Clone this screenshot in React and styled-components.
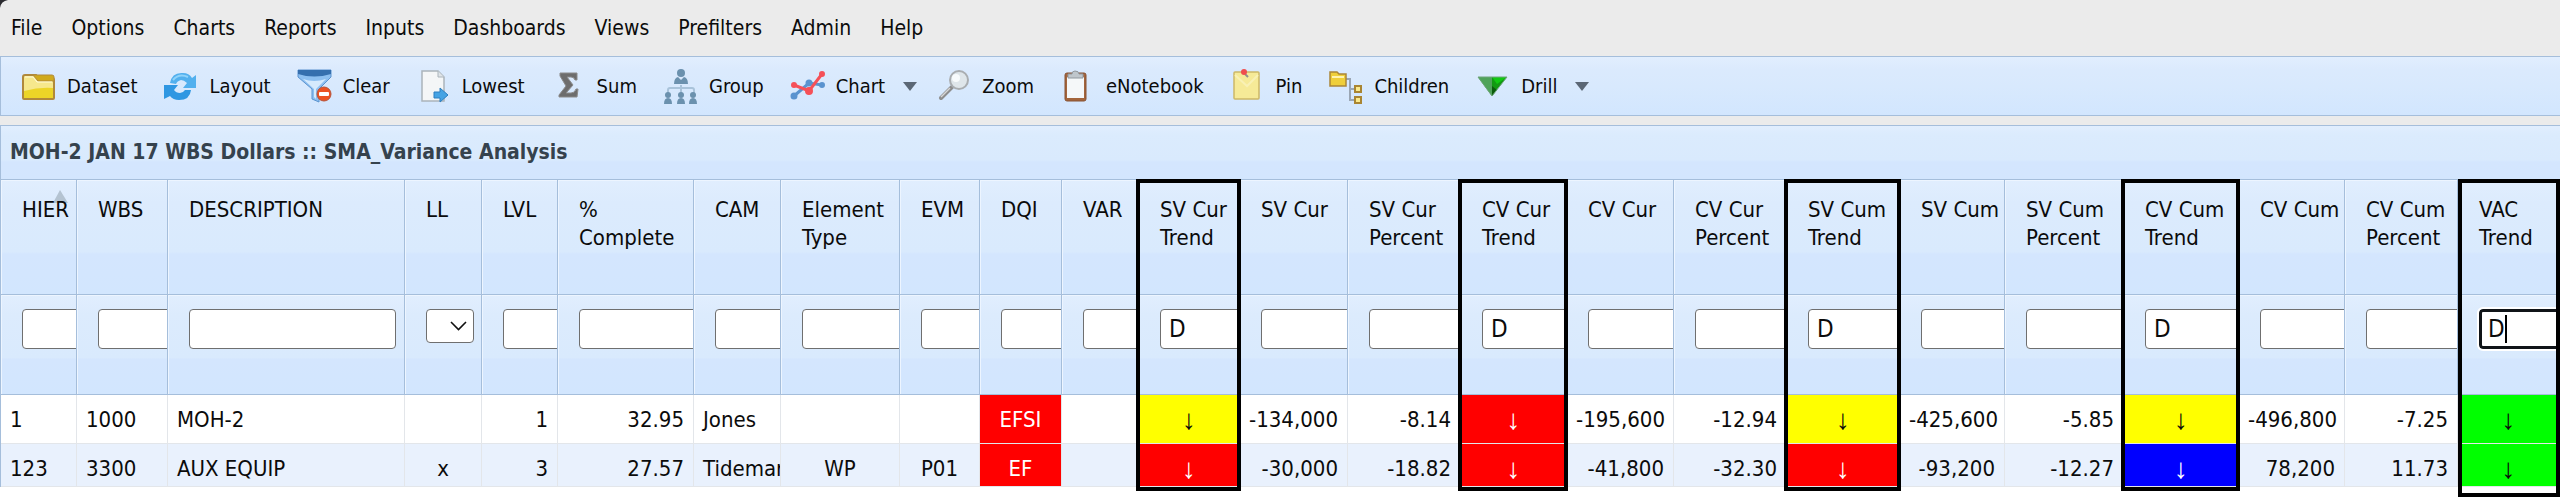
import React from "react";
import styled, { createGlobalStyle } from "styled-components";

const colors = {
  page: "#ebebeb",
  line: "#a5bedb",
  text: "#0b0b0b",
  title: "#35424d",
};

const GlobalStyle = createGlobalStyle`
  * {
    box-sizing: border-box;
  }

  body {
    margin: 0;
    background: #ffffff;
    color: ${colors.text};
    font-family: "DejaVu Sans Condensed", "DejaVu Sans", Tahoma, sans-serif;
    overflow: hidden;
  }
`;

const Page = styled.div`
  display: flex;
  flex-direction: column;
  background: ${colors.page};
`;

const Corner = styled.svg`
  position: absolute;
  top: 0;
  left: 0;
`;

const MenuBar = styled.nav`
  display: flex;
  gap: 29px;
  height: 56px;
  padding: 0 11px;
  align-items: center;
`;

const MenuItem = styled.a`
  color: inherit;
  font-size: 21px;
  line-height: 28px;
  text-decoration: none;
`;

const Toolbar = styled.div`
  display: flex;
  align-items: center;
  gap: 26px;
  height: 60px;
  margin-bottom: 9px;
  padding: 0 20px;
  border: 1px solid ${colors.line};
  border-right: none;
  background: linear-gradient(#e1eefe 0, #dbeafd 12px, #d8e9fd 30px, #d2e6fe 100%);
`;

const ToolButton = styled.button`
  display: flex;
  align-items: center;
  gap: 11px;
  padding: 0;
  border: none;
  background: none;
  color: inherit;
  font-family: inherit;
  font-size: 20px;
  line-height: 28px;
  cursor: pointer;
`;

const Caret = styled.svg`
  margin: 0 -7px 0 7px;
`;

const Title = styled.h1`
  margin: 0;
  height: 54px;
  padding: 12px 9px;
  border: 1px solid ${colors.line};
  border-width: 1px 0 0 1px;
  background: linear-gradient(#e1eefe 0, #dbebfd 9px, #d9eafd 34px, #d4e6fe 36px, #d3e6fe 100%);
  color: ${colors.title};
  font-size: 21px;
  line-height: 28px;
`;

const Grid = styled.table`
  width: 100%;
  table-layout: fixed;
  border-collapse: separate;
  border-spacing: 0;
  border-left: 1px solid ${colors.line};
  font-size: 22px;
  line-height: 28px;
`;

const HeadCell = styled.th`
  position: relative;
  height: ${(p) => (p.$filter ? 100 : 116)}px;
  padding: 0;
  border-right: 1px solid ${colors.line};
  border-bottom: 1px solid ${colors.line};
  border-top: ${(p) => (p.$filter ? "none" : `1px solid ${colors.line}`)};
  box-shadow: inset 1px 1px 0 #edf5ff;
  background: linear-gradient(#e1eefe 0, #dcebfd 20%, #d9eafd 63%, #d4e6fe 65%, #d2e6fe 100%);
  font-weight: normal;
  text-align: left;
  vertical-align: top;
`;

const HeadText = styled.div`
  position: relative;
  padding: 16px 0 0 21px;
`;

const FilterSlot = styled.div`
  position: relative;
  height: 60px;
  padding: 14px 0 0 21px;
  overflow: hidden;
`;

const FilterInput = styled.input`
  display: block;
  width: 207px;
  height: 40px;
  padding: 0 8px;
  border: 1px solid #6f6f6f;
  border-radius: 4px;
  background: #ffffff;
  color: inherit;
  font-family: inherit;
  font-size: 24px;
  outline: none;

  &[data-active="true"] {
    padding: 0 6px;
    border: 3px solid #101418;
    outline: 2px solid #ffffff;
  }
`;

const TextCursor = styled.span`
  position: absolute;
  top: 20px;
  left: 47px;
  width: 2px;
  height: 28px;
  background: #000000;
`;

const SelectWrap = styled.div`
  display: grid;
  width: 48px;
  height: 34px;

  > * {
    grid-area: 1 / 1;
  }

  svg {
    align-self: center;
    justify-self: end;
    margin-right: 7px;
    pointer-events: none;
  }
`;

const FilterSelect = styled.select`
  width: 48px;
  height: 34px;
  appearance: none;
  border: 1px solid #6f6f6f;
  border-radius: 4px;
  background: #ffffff;
`;

const SortMark = styled.svg`
  position: absolute;
  top: 10px;
  left: 52px;
`;

const Row = styled.tr`
  background: ${(p) => (p.$alt ? "#e9f1fd" : "#ffffff")};
`;

const Cell = styled.td`
  padding: ${(p) => (p.$last ? "11px 9px 3px" : "11px 9px 9px")};
  border-right: 1px solid #e3e6ea;
  border-bottom: 1px solid #e3e6ea;
  background: ${(p) => p.$fill || "transparent"};
  color: ${(p) => (p.$light ? "#ffffff" : "inherit")};
  text-align: ${(p) => p.$align};
  white-space: nowrap;
  overflow: hidden;
`;

const Arrow = styled.span`
  display: block;
  font-family: "Liberation Sans", Arial, sans-serif;
  font-size: 28px;
  line-height: 28px;
`;

const Highlight = styled.div`
  position: absolute;
  top: -1px;
  left: ${(p) => (p.$tall ? 0 : -3)}px;
  right: ${(p) => (p.$tall ? -1 : -2)}px;
  height: ${(p) => (p.$tall ? 318 : 312)}px;
  border: 4px solid #000000;
  z-index: 2;
  pointer-events: none;
`;

const Footer = styled.div`
  min-height: 10px;
  background: #ffffff;
`;

const FolderIcon = () => (
  <g>
    <path d="M2 8 Q2 6 4 6 H15 L18 9 H31 Q33 9 33 11 V29 Q33 30 32 30 H3 Q2 30 2 29 Z" fill="#f6e88c" stroke="#b0893b" strokeWidth="2" />
    <path d="M12 6 H31 Q33 6 33 8 V12 H17 Z" fill="#d0aa1c" stroke="#b0893b" />
    <path d="M3 22 Q18 18 32 19 V29 H3 Z" fill="#ecd527" />
    <path d="M4 8 H12 L16 13 H31" fill="none" stroke="#fffbd8" />
  </g>
);

const RefreshIcon = () => (
  <g>
    <path d="M7 14 Q9 3 20 4 Q26 4 29 9 L33 6 V19 H20 L24 14 Q21 11 18 11 Q14 12 13 15 Z" fill="#52b0ee" />
    <path d="M28 21 Q27 31 16 31 Q10 31 7 27 L1 30 V16 H15 L11 21 Q13 24 17 24 Q20 24 22 21 Z" fill="#2f97e2" />
    <path d="M10 11 Q16 4 25 8" fill="none" stroke="#8fd3fa" strokeWidth="2" />
  </g>
);

const FunnelIcon = () => (
  <g>
    <path d="M1 1 H34 V8 L22 20 V33 L15 30 V20 L1 8 Z" fill="#8dbff0" stroke="#5a93cf" />
    <path d="M1 1 H34 V5 Q17 10 1 5 Z" fill="#356fae" />
    <path d="M6 10 Q17 14 29 10 L19 20 V30 L17 28 V20 Z" fill="#d5eafd" />
    <circle cx="27" cy="25" r="7" fill="#ec5222" stroke="#b5533a" />
    <rect x="22" y="23" width="10" height="4" rx="1" fill="#ffffff" />
  </g>
);

const PageIcon = () => (
  <g>
    <path d="M6 2 H22 L28 8 V32 H6 Z" fill="#f4f6f7" stroke="#aab4bb" strokeWidth="1.5" />
    <path d="M22 2 V8 H28" fill="#dfe4e8" stroke="#aab4bb" />
    <path d="M18 23 H24 V19 L32 26 L24 33 V29 H18 Z" fill="#45a3e4" stroke="#2c7fc0" />
  </g>
);

const SumIcon = () => (
  <g>
    <path d="M9 4 H26 V11 H24 Q23 8 20 8 H16 L22 16 L15 24 H20 Q24 24 25 20 H27 L26 28 H8 V26 L15 17 L9 7 Z" fill="#6d6d6d" stroke="#8b8b8b" />
  </g>
);

const GroupIcon = () => (
  <g fill="#6b91ae">
    <path d="M18 16 V22 M5 26 V21 Q5 19 7 19 H29 Q31 19 31 21 V26 M18 19 V26" fill="none" stroke="#a9c3da" strokeWidth="2" />
    <circle cx="18" cy="4" r="4" />
    <path d="M11 15 Q11 9 15 8 L18 11 L21 8 Q25 9 25 15 Z" />
    {[5, 18, 30].map((x) => (
      <g key={x}>
        <circle cx={x} cy="26" r="3" />
        <path d={`M${x - 4} 35 Q${x - 4} 29 ${x} 29 Q${x + 4} 29 ${x + 4} 35 Z`} />
      </g>
    ))}
  </g>
);

const ChartIcon = () => (
  <g fill="none" strokeWidth="3">
    <path d="M4 27 L19 14 L32 16" stroke="#5a93cf" />
    <circle cx="4" cy="27" r="2" stroke="#5a93cf" fill="#5a93cf" />
    <circle cx="19" cy="14" r="2" stroke="#5a93cf" />
    <circle cx="32" cy="16" r="1.5" stroke="#5a93cf" fill="#5a93cf" />
    <path d="M4 16 L19 22 L32 5" stroke="#f55058" />
    <circle cx="4" cy="16" r="1.5" stroke="#f55058" fill="#f9d6dc" />
    <circle cx="19" cy="22" r="2.5" stroke="#f55058" fill="#f55058" />
    <circle cx="32" cy="5" r="1.5" stroke="#f55058" fill="#f9b2b8" />
  </g>
);

const ZoomIcon = () => (
  <g>
    <path d="M5 29 L16 18" stroke="#8d8d8d" strokeWidth="4" strokeLinecap="round" />
    <path d="M5 28 L14 19" stroke="#d6d6d6" strokeWidth="1.5" />
    <circle cx="23" cy="11" r="9" fill="#dfe6ea" stroke="#a9adb0" strokeWidth="2" />
    <circle cx="20" cy="9" r="4" fill="#f8fbfc" />
  </g>
);

const ClipboardIcon = () => (
  <g>
    <rect x="5" y="4" width="21" height="28" rx="2" fill="#a3653c" stroke="#875232" />
    <rect x="7" y="8" width="17" height="21" fill="#f5f8f9" />
    <path d="M8 9 V5 H12 Q12 2 15 2 Q19 2 19 5 H23 V9 Z" fill="#bfc6cb" stroke="#90989e" />
  </g>
);

const PinIcon = () => (
  <g>
    <rect x="4" y="3" width="25" height="27" rx="1" fill="#f6ea97" stroke="#cdb867" strokeWidth="1.5" />
    <path d="M5 6 L17 17 L28 6" fill="none" stroke="#f9f1b4" strokeWidth="2" />
    <path d="M15 5 L18 8" stroke="#8f8f8f" strokeWidth="2" />
    <circle cx="14" cy="3" r="3" fill="#f04d4d" />
  </g>
);

const ChildrenIcon = () => (
  <g>
    <path d="M17 10 H22 V31 H27 M22 20 H27" fill="none" stroke="#9aa6b4" strokeWidth="2" />
    <path d="M2 3 H9 L11 5 H18 V17 H2 Z" fill="#efcf3a" stroke="#ab8638" strokeWidth="1.5" />
    <path d="M4 8 H16" stroke="#fff4b0" strokeWidth="2" />
    <rect x="27" y="17" width="6" height="6" fill="#fbe98a" stroke="#a98532" strokeWidth="2" />
    <rect x="27" y="28" width="6" height="6" fill="#fbe98a" stroke="#a98532" strokeWidth="2" />
  </g>
);

const DrillIcon = () => (
  <g>
    <path d="M3 8 H32 L17 27 Z" fill="#129a12" />
    <path d="M3 8 H17 V27 Z" fill="#4fa35a" />
    <path d="M17 8 H32 L22 15 Z" fill="#12c912" />
    <path d="M17 17 L22 21 L17 27 Z" fill="#0b5c0b" />
    <path d="M3 8 H32 L17 27 Z" fill="none" stroke="#6fa57a" />
  </g>
);

const menu = ["File", "Options", "Charts", "Reports", "Inputs", "Dashboards", "Views", "Prefilters", "Admin", "Help"];

const tools = [
  { label: "Dataset", Icon: FolderIcon },
  { label: "Layout", Icon: RefreshIcon },
  { label: "Clear", Icon: FunnelIcon },
  { label: "Lowest", Icon: PageIcon },
  { label: "Sum", Icon: SumIcon },
  { label: "Group", Icon: GroupIcon },
  { label: "Chart", Icon: ChartIcon, menu: true },
  { label: "Zoom", Icon: ZoomIcon },
  { label: "eNotebook", Icon: ClipboardIcon },
  { label: "Pin", Icon: PinIcon },
  { label: "Children", Icon: ChildrenIcon },
  { label: "Drill", Icon: DrillIcon, menu: true },
];

const columns = [
  { label: "HIER", width: 76, sorted: true },
  { label: "WBS", width: 91 },
  { label: "DESCRIPTION", width: 237 },
  { label: "LL", width: 77, select: true, align: "center" },
  { label: "LVL", width: 76, align: "right" },
  { label: "% Complete", width: 136, align: "right" },
  { label: "CAM", width: 87 },
  { label: "Element Type", width: 119, align: "center" },
  { label: "EVM", width: 80, align: "center" },
  { label: "DQI", width: 82, align: "center" },
  { label: "VAR", width: 77 },
  { label: "SV Cur Trend", width: 101, trend: true },
  { label: "SV Cur", width: 108, align: "right" },
  { label: "SV Cur Percent", width: 113, align: "right" },
  { label: "CV Cur Trend", width: 106, trend: true },
  { label: "CV Cur", width: 107, align: "right" },
  { label: "CV Cur Percent", width: 113, align: "right" },
  { label: "SV Cum Trend", width: 113, trend: true },
  { label: "SV Cum", width: 105, align: "right" },
  { label: "SV Cum Percent", width: 119, align: "right" },
  { label: "CV Cum Trend", width: 115, trend: true },
  { label: "CV Cum", width: 106, align: "right" },
  { label: "CV Cum Percent", width: 113, align: "right" },
  { label: "VAC Trend", width: 102, trend: true, active: true },
];

const red = { fill: "#ff0000", light: true };
const yellow = { fill: "#ffff00" };
const blue = { fill: "#0000ff", light: true };
const green = { fill: "#00ff00" };

const rows = [
  ["1", "1000", "MOH-2", "", "1", "32.95", "Jones", "", "", { text: "EFSI", ...red }, "", yellow, "-134,000", "-8.14", red, "-195,600", "-12.94", yellow, "-425,600", "-5.85", yellow, "-496,800", "-7.25", green],
  ["123", "3300", "AUX EQUIP", "x", "3", "27.57", "Tideman", "WP", "P01", { text: "EF", ...red }, "", red, "-30,000", "-18.82", red, "-41,800", "-32.30", red, "-93,200", "-12.27", blue, "78,200", "11.73", green],
];

const Filter = ({ column }) => {
  if (column.select) {
    return (
      <SelectWrap>
        <FilterSelect aria-label={`Filter ${column.label}`} />
        <svg width="17" height="10" viewBox="0 0 17 10">
          <path d="M1 1 L8.5 8.5 L16 1" fill="none" stroke="#111111" strokeWidth="1.6" />
        </svg>
      </SelectWrap>
    );
  }
  return (
    <>
      <FilterInput
        type="text"
        aria-label={`Filter ${column.label}`}
        defaultValue={column.trend ? "D" : ""}
        data-active={column.active}
      />
      {column.active && <TextCursor />}
    </>
  );
};

const App = () => (
  <Page>
    <GlobalStyle />
    <Corner width="8" height="8">
      <path d="M0 0 H8 Q1 1 0 8 Z" fill="#2b2b30" />
    </Corner>

    <MenuBar>
      {menu.map((item) => (
        <MenuItem key={item} href="#">{item}</MenuItem>
      ))}
    </MenuBar>

    <Toolbar>
      {tools.map(({ label, Icon, menu: hasMenu }) => (
        <ToolButton key={label} type="button">
          <svg width="35" height="35" viewBox="0 0 35 35">
            <Icon />
          </svg>
          {label}
          {hasMenu && (
            <Caret width="14" height="9" viewBox="0 0 14 9">
              <path d="M0 0 H14 L7 9 Z" fill="#5b6775" />
            </Caret>
          )}
        </ToolButton>
      ))}
    </Toolbar>

    <Title>MOH-2 JAN 17 WBS Dollars :: SMA_Variance Analysis</Title>

    <Grid>
      <colgroup>
        {columns.map((c) => (
          <col key={c.label} width={c.width} />
        ))}
      </colgroup>
      <thead>
        <tr>
          {columns.map((c) => (
            <HeadCell key={c.label} scope="col">
              {c.sorted && (
                <SortMark width="15" height="13" viewBox="0 0 15 13">
                  <path d="M7 0 L15 13 H0 Z" fill="#b4c3d1" />
                </SortMark>
              )}
              <HeadText>{c.label}</HeadText>
              {c.trend && <Highlight $tall={c.active} />}
            </HeadCell>
          ))}
        </tr>
        <tr>
          {columns.map((c) => (
            <HeadCell key={c.label} as="td" $filter>
              <FilterSlot>
                <Filter column={c} />
              </FilterSlot>
            </HeadCell>
          ))}
        </tr>
      </thead>
      <tbody>
        {rows.map((row, r) => (
          <Row key={row[0]} $alt={r % 2 === 1}>
            {row.map((value, i) => (
              <Cell
                key={columns[i].label}
                $last={r === rows.length - 1}
                $align={columns[i].trend ? "center" : columns[i].align || "left"}
                $fill={value.fill}
                $light={value.light}
              >
                {columns[i].trend ? <Arrow>↓</Arrow> : value.text ?? value}
              </Cell>
            ))}
          </Row>
        ))}
      </tbody>
    </Grid>
    <Footer />
  </Page>
);

export default App;
